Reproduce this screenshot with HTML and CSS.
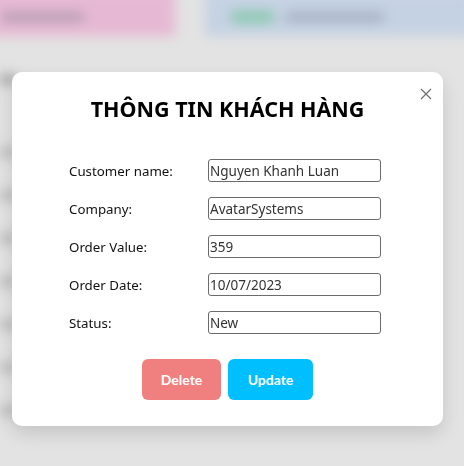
FILE: index.html
```html
<!DOCTYPE html>
<html lang="vi">
<head>
<meta charset="utf-8">
<title>Thông tin khách hàng</title>
<link rel="stylesheet" href="styles.css">
</head>
<body>
<div class="page">
  <div class="cards">
    <div class="card card-pink">
      <span class="blur-text w90"></span>
    </div>
    <div class="card card-blue">
      <span class="pill"></span>
      <span class="blur-text w100"></span>
    </div>
  </div>
  <div class="rows">
    <span class="row-line dark"></span>
    <span class="row-line"></span>
    <span class="row-line"></span>
    <span class="row-line"></span>
    <span class="row-line"></span>
    <span class="row-line"></span>
    <span class="row-line"></span>
    <span class="row-line"></span>
  </div>
</div>

<div class="overlay">
  <div class="modal">
    <button class="close" aria-label="Close">
      <svg width="12" height="12" viewBox="0 0 12 12"><path d="M1 1L11 11M11 1L1 11" stroke="#707070" stroke-width="1.2" fill="none"/></svg>
    </button>
    <h1 class="title">THÔNG TIN KHÁCH HÀNG</h1>
    <form class="form">
      <label class="label">Customer name:</label>
      <input class="field" type="text" value="Nguyen Khanh Luan">
      <label class="label">Company:</label>
      <input class="field" type="text" value="AvatarSystems">
      <label class="label">Order Value:</label>
      <input class="field" type="text" value="359">
      <label class="label">Order Date:</label>
      <input class="field" type="text" value="10/07/2023">
      <label class="label">Status:</label>
      <input class="field" type="text" value="New">
    </form>
    <div class="actions">
      <button class="btn btn-delete">Delete</button>
      <button class="btn btn-update">Update</button>
    </div>
  </div>
</div>
</body>
</html>
```

FILE: styles.css
```css
* { box-sizing: border-box; }
html, body { margin: 0; padding: 0; }
body {
  width: 464px;
  height: 466px;
  overflow: hidden;
  background: #e3e3e3;
  font-family: "Noto Sans", "Open Sans", sans-serif;
}

/* blurred page behind the modal */
.page {
  width: 464px;
  height: 466px;
  filter: blur(6px);
  display: flex;
  flex-direction: column;
}
.cards {
  display: flex;
  gap: 30px;
  height: 46px;
  margin-top: -10px;
  margin-left: -10px;
}
.card {
  display: flex;
  align-items: center;
  gap: 10px;
  padding-top: 8px;
}
.card-pink { width: 185px; background: #e6b8d3; padding-left: 10px; }
.card-blue { flex: 1; background: #c5d2e3; padding-left: 25px; margin-right: -10px; }
.blur-text { height: 10px; background: #b8a0b4; border-radius: 5px; }
.card-blue .blur-text { background: #a6b2c4; }
.w90 { width: 85px; }
.w100 { width: 100px; }
.pill { width: 45px; height: 12px; background: #8cc9b0; border-radius: 6px; }

.rows {
  display: flex;
  flex-direction: column;
  gap: 32px;
  padding-top: 38px;
}
.row-line { display: block; width: 16px; height: 11px; background: #bbbbbb; }
.row-line.dark { background: #a5a5a5; margin-bottom: 30px; }

/* modal overlay */
.overlay {
  position: fixed;
  inset: 0;
  padding: 72px 0 0 12px;
}
.modal {
  position: relative;
  width: 431px;
  height: 354px;
  background: #fff;
  border-radius: 10px;
  box-shadow: 0 8px 18px rgba(0, 0, 0, 0.13);
  display: flex;
  flex-direction: column;
  align-items: center;
  padding-top: 22px;
}
.close {
  position: absolute;
  top: 15px;
  right: 10px;
  width: 14px;
  height: 14px;
  padding: 0;
  border: 0;
  background: transparent;
  display: flex;
  align-items: center;
  justify-content: center;
}
.title {
  margin: 0;
  font-size: 21.5px;
  font-weight: 700;
  color: #000;
  line-height: 30px;
}
.form {
  align-self: flex-start;
  margin: 35px 0 0 57px;
  display: grid;
  grid-template-columns: 139px 173px;
  row-gap: 15px;
  align-items: center;
}
.label {
  font-size: 13.3px;
  color: #111;
}
.field {
  width: 173px;
  height: 23px;
  margin: 0;
  padding: 0 1px;
  border: 1px solid #6b6b6b;
  border-radius: 3px;
  font-family: "Noto Sans", "Open Sans", sans-serif;
  font-size: 13.5px;
  color: #333;
  background: #fff;
}
.actions {
  display: flex;
  gap: 7px;
  margin-top: 25px;
}
.btn {
  height: 41px;
  border: 0;
  border-radius: 6px;
  color: #fff;
  font-family: Lato, "Noto Sans", sans-serif;
  font-weight: 700;
  font-size: 14px;
  padding: 0;
}
.btn-delete { width: 79px; background: #f08080; }
.btn-update { width: 85px; background: #00bfff; }
```
